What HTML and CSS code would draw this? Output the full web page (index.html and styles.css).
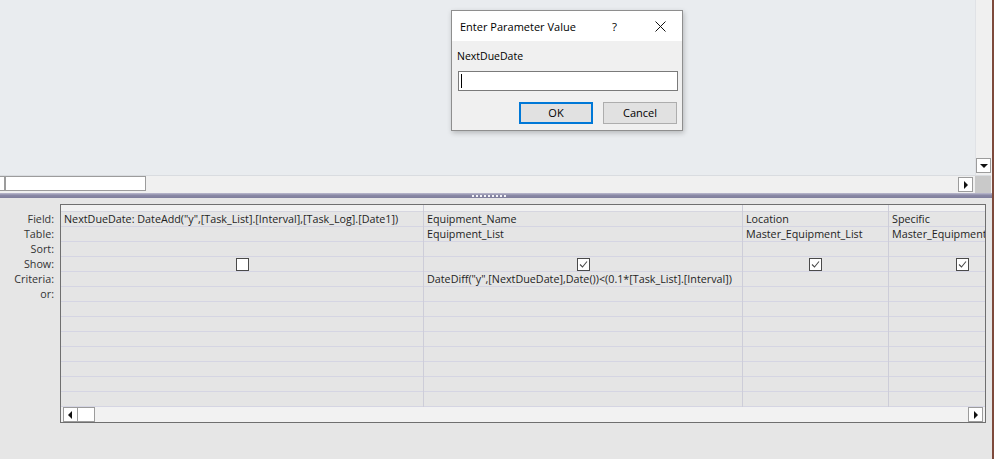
FILE: index.html
```html
<!DOCTYPE html>
<html>
<head>
<meta charset="utf-8">
<link rel="stylesheet" href="styles.css">
</head>
<body>
<div class="window">
  <div class="top">
    <div class="canvas"></div>
    <div class="vscroll"><div class="sbtn"><span class="tri-down"></span></div></div>
    <div class="gutter"></div>
    <div class="hscroll">
      <div class="hstub"></div>
      <div class="hthumb"></div>
      <div class="hspace"></div>
      <div class="sbtn hbtn"><span class="tri-right"></span></div>
    </div>
    <div class="corner"></div>
    <div class="gutter"></div>
  </div>
  <div class="splitter"><span class="grip"></span></div>
  <div class="bottom">
    <div class="labels">
      <div>Field:</div>
      <div>Table:</div>
      <div>Sort:</div>
      <div>Show:</div>
      <div>Criteria:</div>
      <div>or:</div>
    </div>
    <div class="qgrid">
      <div class="cols">
        <div class="col c1">
          <div class="sel"></div>
          <div class="cell">NextDueDate: DateAdd("y",[Task_List].[Interval],[Task_Log].[Date1])</div>
          <div class="cell"></div>
          <div class="cell"></div>
          <div class="cell chk"><span class="box"></span></div>
          <div class="cell"></div>
          <div class="cell"></div>
          <div class="cell"></div><div class="cell"></div><div class="cell"></div><div class="cell"></div><div class="cell"></div><div class="cell"></div><div class="cell"></div>
        </div>
        <div class="col c2">
          <div class="sel"></div>
          <div class="cell">Equipment_Name</div>
          <div class="cell">Equipment_List</div>
          <div class="cell"></div>
          <div class="cell chk"><span class="box"><svg width="11" height="11" viewBox="0 0 11 11"><polyline points="2,5.5 4.5,8 9,2.5" fill="none" stroke="#4a4a4a" stroke-width="1.1"/></svg></span></div>
          <div class="cell">DateDiff("y",[NextDueDate],Date())&lt;(0.1*[Task_List].[Interval])</div>
          <div class="cell"></div>
          <div class="cell"></div><div class="cell"></div><div class="cell"></div><div class="cell"></div><div class="cell"></div><div class="cell"></div><div class="cell"></div>
        </div>
        <div class="col c3">
          <div class="sel"></div>
          <div class="cell">Location</div>
          <div class="cell">Master_Equipment_List</div>
          <div class="cell"></div>
          <div class="cell chk"><span class="box"><svg width="11" height="11" viewBox="0 0 11 11"><polyline points="2,5.5 4.5,8 9,2.5" fill="none" stroke="#4a4a4a" stroke-width="1.1"/></svg></span></div>
          <div class="cell"></div>
          <div class="cell"></div>
          <div class="cell"></div><div class="cell"></div><div class="cell"></div><div class="cell"></div><div class="cell"></div><div class="cell"></div><div class="cell"></div>
        </div>
        <div class="col c4">
          <div class="sel"></div>
          <div class="cell">Specific</div>
          <div class="cell">Master_Equipment_List</div>
          <div class="cell"></div>
          <div class="cell chk"><span class="box"><svg width="11" height="11" viewBox="0 0 11 11"><polyline points="2,5.5 4.5,8 9,2.5" fill="none" stroke="#4a4a4a" stroke-width="1.1"/></svg></span></div>
          <div class="cell"></div>
          <div class="cell"></div>
          <div class="cell"></div><div class="cell"></div><div class="cell"></div><div class="cell"></div><div class="cell"></div><div class="cell"></div><div class="cell"></div>
        </div>
      </div>
      <div class="gscroll">
        <div class="sbtn"><span class="tri-left"></span></div>
        <div class="gthumb"></div>
        <div class="hspace"></div>
        <div class="sbtn"><span class="tri-right"></span></div>
      </div>
    </div>
  </div>
</div>

<div class="dialog">
  <div class="titlebar">
    <span class="title">Enter Parameter Value</span>
    <span class="help">?</span>
    <svg class="close" width="11" height="11" viewBox="0 0 11 11"><path d="M0.5 0.5 L10.5 10.5 M10.5 0.5 L0.5 10.5" stroke="#111" stroke-width="1" fill="none"/></svg>
  </div>
  <div class="dbody">
    <div class="plabel">NextDueDate</div>
    <div class="pinput"><span class="caret"></span></div>
    <div class="buttons">
      <div class="btn ok">OK</div>
      <div class="btn">Cancel</div>
    </div>
  </div>
</div>
</body>
</html>
```

FILE: styles.css
```css
* { box-sizing: border-box; }
body {
  margin: 0;
  width: 994px;
  height: 459px;
  overflow: hidden;
  position: relative;
  background: #e6e6e6;
  font-family: "Open Sans", "Noto Sans", sans-serif;
  color: #222;
}
.window {
  width: 994px;
  height: 459px;
  border-right: 2px solid #7e4a3c;
  display: flex;
  flex-direction: column;
  background: #e6e6e6;
}
.top {
  display: grid;
  grid-template-columns: 975px 16px 1fr;
  grid-template-rows: 175px 18px;
}
.canvas { background: #e9ecef; }
.gutter { background: #f4f4f4; }
.vscroll {
  background: #f0f0f0;
  border-left: 1px solid #e0e2e6;
  display: flex;
  flex-direction: column;
  justify-content: flex-end;
  padding-bottom: 2px;
}
.sbtn {
  width: 15px;
  height: 15px;
  flex: none;
  border: 1px solid #9c9c9c;
  background: #fff;
  display: flex;
  align-items: center;
  justify-content: center;
}
.tri-down { width: 0; height: 0; border-left: 4px solid transparent; border-right: 4px solid transparent; border-top: 4px solid #111; }
.tri-right { width: 0; height: 0; border-top: 4px solid transparent; border-bottom: 4px solid transparent; border-left: 4px solid #111; margin-left: 1px; }
.tri-left { width: 0; height: 0; border-top: 4px solid transparent; border-bottom: 4px solid transparent; border-right: 4px solid #111; margin-right: 1px; }
.hscroll {
  border-top: 1px solid #d9dce0;
  background: #f0f0f0;
  display: flex;
  align-items: flex-start;
  padding-right: 2px;
}
.hstub {
  width: 5px;
  height: 15px;
  border: 1px solid #9c9c9c;
  border-left: none;
  background: #fff;
}
.hthumb {
  width: 141px;
  height: 15px;
  border: 1px solid #9c9c9c;
  background: #fff;
}
.hspace { flex: 1; }
.hbtn { margin-top: 1px; }
.corner { background: #c9c9c9; border-top: 1px solid #d9dce0; }
.splitter {
  height: 5px;
  background: linear-gradient(#bdbcd0, #8a89a6 45%, #7f7e9c);
  display: flex;
  justify-content: center;
}
.grip {
  width: 36px;
  height: 2px;
  margin-top: 2px;
  margin-left: -12px;
  background: repeating-linear-gradient(90deg, #f4f4f8 0 2px, transparent 2px 4px);
}
.bottom {
  flex: 1;
  display: flex;
  padding-top: 6px;
  background: #e6e6e6;
}
.labels {
  width: 60px;
  flex: none;
  padding-top: 8px;
  padding-right: 6px;
  text-align: right;
  font-size: 10.75px;
  line-height: 15px;
  color: #333;
}
.qgrid {
  width: 926px;
  height: 219px;
  flex: none;
  border: 1px solid #6f6f6f;
  display: flex;
  flex-direction: column;
  background: #e5e5e5;
}
.cols {
  display: flex;
  height: 202px;
  overflow: hidden;
}
.col {
  flex: none;
  border-right: 1px solid #cdcdd8;
  display: flex;
  flex-direction: column;
}
.c1 { width: 363px; }
.c2 { width: 319px; }
.c3 { width: 146px; }
.c4 { width: 148px; }
.sel {
  height: 7px;
  flex: none;
  background: #f1f1f1;
  border-bottom: 1px solid #d6d6e0;
}
.cell {
  height: 15px;
  flex: none;
  border-bottom: 1px solid #d5d5e3;
  padding-left: 3px;
  font-size: 10.75px;
  line-height: 14px;
  white-space: nowrap;
  overflow: hidden;
  color: #1e1e1e;
}
.cell.chk {
  display: flex;
  justify-content: center;
  align-items: center;
  padding-left: 0;
}
.box {
  width: 13px;
  height: 13px;
  border: 1px solid #4a4a4a;
  background: #fff;
  display: flex;
  align-items: center;
  justify-content: center;
}
.box svg { display: block; }
.gscroll {
  height: 15px;
  background: #f2f2f2;
  display: flex;
  padding: 0 2px;
}
.gthumb {
  width: 17px;
  height: 15px;
  border: 1px solid #9c9c9c;
  border-left: none;
  background: #fff;
}
.dialog {
  position: absolute;
  left: 451px;
  top: 10px;
  width: 232px;
  height: 121px;
  border: 1px solid #8e8e8e;
  background: #f0f0f0;
  box-shadow: 1px 2px 5px rgba(0, 0, 0, 0.22);
  display: flex;
  flex-direction: column;
}
.titlebar {
  height: 30px;
  flex: none;
  background: #fff;
  display: flex;
  align-items: center;
  padding-left: 8px;
  padding-right: 16px;
  font-size: 11px;
  color: #000;
}
.title { flex: 1; }
.help { margin-right: 38px; font-size: 11.5px; }
.close { display: block; }
.dbody {
  padding: 0 5px;
  display: flex;
  flex-direction: column;
}
.plabel {
  margin-top: 7px;
  font-size: 10.5px;
  line-height: 16px;
  color: #000;
}
.pinput {
  margin-top: 7px;
  margin-left: 1px;
  width: 220px;
  height: 20px;
  border: 1px solid #7a7a7a;
  background: #fff;
  display: flex;
  align-items: center;
  padding-left: 2px;
}
.caret { width: 1px; height: 14px; background: #000; }
.buttons {
  margin-top: 11px;
  display: flex;
  justify-content: flex-end;
  gap: 10px;
}
.btn {
  width: 74px;
  height: 22px;
  border: 1px solid #adadad;
  background: #e1e1e1;
  font-size: 11px;
  line-height: 20px;
  text-align: center;
  color: #000;
}
.btn.ok {
  border: 2px solid #0078d7;
  line-height: 18px;
}
```
